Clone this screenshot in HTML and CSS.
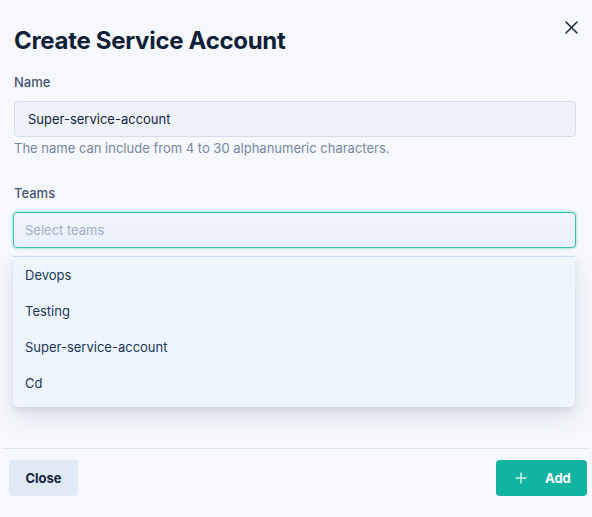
FILE: index.html
```html
<!DOCTYPE html>
<html lang="en">
<head>
<meta charset="utf-8">
<title>Create Service Account</title>
<link rel="stylesheet" href="styles.css">
</head>
<body>
<div class="dialog">
  <div class="content">
    <div class="header">
      <h1 class="title">Create Service Account</h1>
      <button class="close" aria-label="Close">
        <svg viewBox="0 0 13 13" width="13" height="13"><path d="M1 1 L12 12 M12 1 L1 12" stroke="#1b2940" stroke-width="1.5" stroke-linecap="round" fill="none"/></svg>
      </button>
    </div>
    <div class="field">
      <label class="label">Name</label>
      <div class="input">Super-service-account</div>
      <p class="help">The name can include from 4 to 30 alphanumeric characters.</p>
    </div>
    <div class="field teams">
      <label class="label">Teams</label>
      <div class="input select">Select teams</div>
      <ul class="menu">
        <li>Devops</li>
        <li>Testing</li>
        <li>Super-service-account</li>
        <li>Cd</li>
      </ul>
    </div>
  </div>
  <div class="footer">
    <button class="btn btn-secondary">Close</button>
    <button class="btn btn-primary">
      <svg viewBox="0 0 12 12" width="12" height="12"><path d="M6 0.5 V11.5 M0.5 6 H11.5" stroke="#cdeee8" stroke-width="1.5" fill="none"/></svg>
      <span>Add</span>
    </button>
  </div>
</div>
</body>
</html>
```

FILE: styles.css
```css
* { box-sizing: border-box; }
html, body { margin: 0; padding: 0; }
body {
  background: #f6f8fd;
  font-family: Inter, "Noto Sans", sans-serif;
  color: #1b2a45;
  width: 592px;
  height: 517px;
  overflow: hidden;
}
.dialog { display: flex; flex-direction: column; }
.content { padding: 0 16px 0 14px; }
.header {
  display: flex;
  justify-content: space-between;
  align-items: flex-start;
  padding-top: 20px;
}
.title {
  margin: 5px 0 0;
  font-size: 24px;
  line-height: 32px;
  font-weight: 700;
  color: #0f1f38;
  letter-spacing: -0.3px;
}
.close {
  border: 0;
  background: none;
  padding: 0;
  margin: 1px -2px 0 0;
  width: 13px;
  height: 13px;
  display: flex;
}
.field { display: flex; flex-direction: column; }
.label {
  margin-top: 15px;
  font-size: 13px;
  line-height: 20px;
  font-weight: 500;
  color: #46546f;
  margin-bottom: 9px;
}
.teams .label { margin-top: 25px; }
.input {
  height: 36px;
  border: 1px solid #d4dded;
  border-radius: 4px;
  background: #eef3fb;
  font-size: 13px;
  font-weight: 400;
  line-height: 34px;
  padding: 0 13px;
  color: #142440;
}
.help {
  margin: 1px 0 0;
  font-size: 13px;
  line-height: 20px;
  font-weight: 400;
  color: #7587a2;
}
.select {
  margin-left: -1px;
  border: 1.5px solid #3cc1a6;
  box-shadow: 0 0 0 1.5px #c9ece6;
  color: #a3afc3;
  font-weight: 400;
  padding: 0 11px;
  background: linear-gradient(#f0f5fc, #eaf0fa);
}
.menu {
  list-style: none;
  margin: 8px 1px 41px -1px;
  padding: 0 0 6px;
  background: #eff5fd;
  border-top: 1px solid #c6ddf6;
  border-radius: 0 0 5px 5px;
  box-shadow: 0 4px 6px rgba(40, 50, 90, 0.10), 0 12px 24px rgba(40, 50, 90, 0.10);
}
.menu li {
  height: 36px;
  line-height: 36px;
  padding: 0 12px;
  font-size: 13px;
  font-weight: 400;
  color: #183659;
}
.footer {
  margin: 0 2px 0 3px;
  border-top: 1px solid #e0e6f1;
  padding: 11px 3px 0 6px;
  display: flex;
  justify-content: space-between;
}
.btn {
  height: 36px;
  border: 0;
  border-radius: 4px;
  font-family: inherit;
  font-size: 13px;
  font-weight: 700;
  cursor: pointer;
}
.btn-secondary {
  width: 69px;
  background: #e0eaf7;
  color: #15243d;
}
.btn-primary {
  width: 91px;
  background: #12b3a1;
  color: #ffffff;
  display: flex;
  align-items: center;
  padding: 0 0 0 19px;
  gap: 18px;
}
.btn-primary svg { display: block; }
```
